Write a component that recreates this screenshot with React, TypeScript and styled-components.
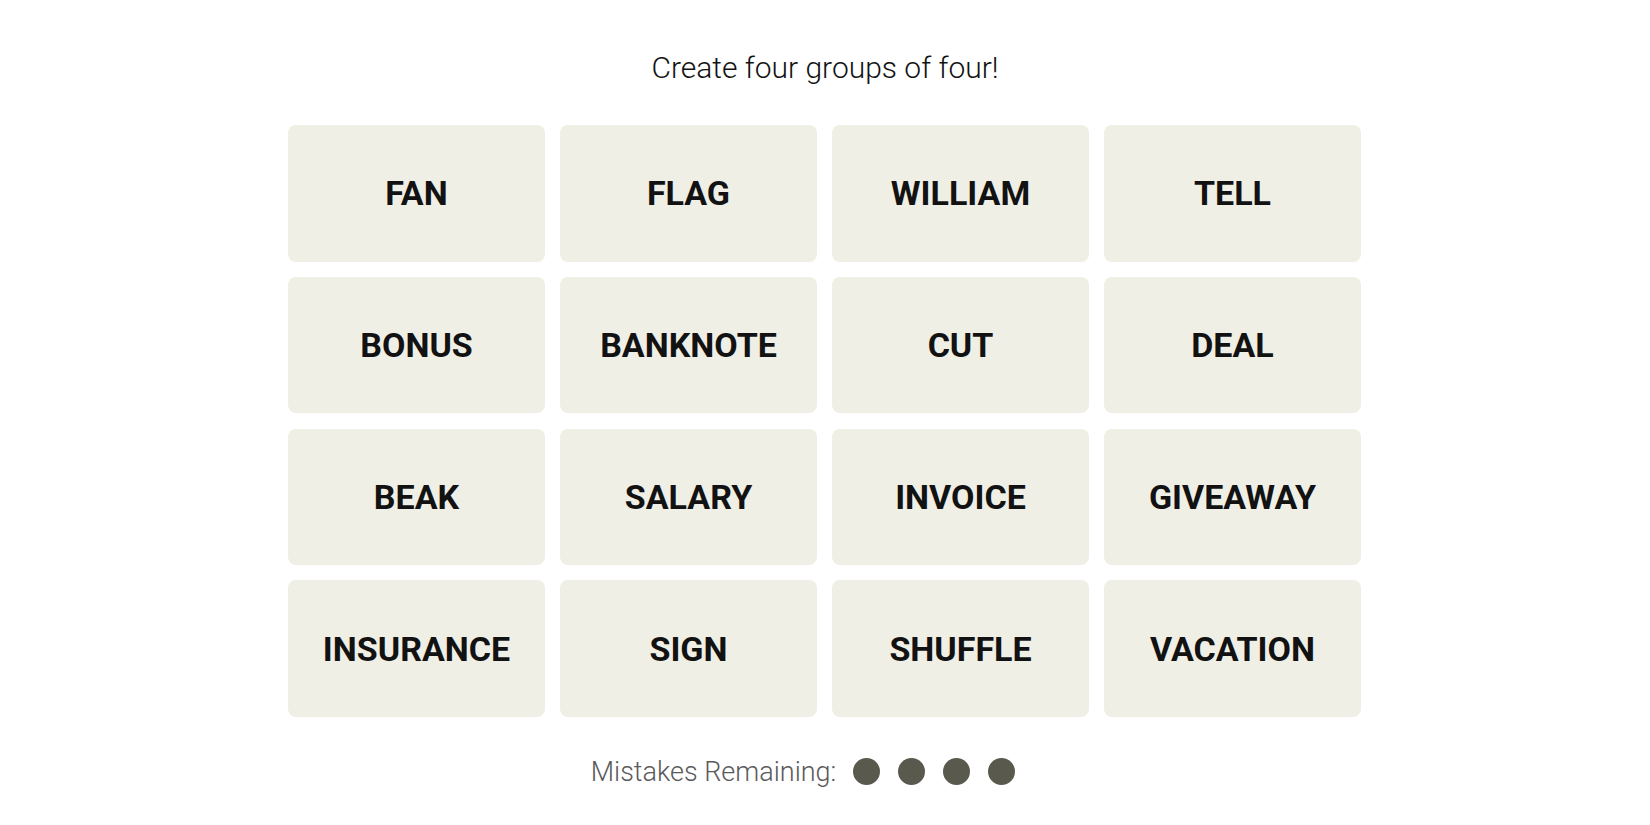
import React from "react";
import styled, { createGlobalStyle } from "styled-components";

const Global = createGlobalStyle`
  html, body { margin: 0; padding: 0; background: #ffffff; }
  body { font-family: Roboto, "Liberation Sans", sans-serif; }
`;

const Page = styled.main`
  display: flex;
  flex-direction: column;
  align-items: center;
  padding-top: 47px;
`;

const Title = styled.h1`
  margin: 0;
  font-family: Roboto, "Liberation Sans", sans-serif;
  font-weight: 300;
  font-size: 30px;
  line-height: 42px;
  color: #121212;
`;

const Board = styled.div`
  margin-top: 36px;
  margin-right: 1px;
  display: grid;
  grid-template-columns: repeat(4, 257px);
  grid-auto-rows: 136.5px;
  column-gap: 15px;
  row-gap: 15.3px;
`;

const Tile = styled.button`
  border: none;
  border-radius: 8px;
  background: #efefe6;
  color: #121212;
  font-family: Roboto, "Liberation Sans", sans-serif;
  font-weight: 700;
  font-size: 34px;
  text-transform: uppercase;
  display: flex;
  align-items: center;
  justify-content: center;
  padding: 0;
  cursor: pointer;
`;

const Mistakes = styled.div`
  margin-top: 39px;
  display: flex;
  align-items: center;
  gap: 17px;
`;

const MistakesLabel = styled.span`
  font-family: Roboto, "Liberation Sans", sans-serif;
  font-weight: 300;
  font-size: 27px;
  color: #5a5a5a;
`;

const Dots = styled.div`
  display: flex;
  gap: 18px;
  padding-right: 44px;
`;

const Dot = styled.span`
  width: 27px;
  height: 27px;
  border-radius: 50%;
  background: #5a594e;
`;

const words = [
  "FAN", "FLAG", "WILLIAM", "TELL",
  "BONUS", "BANKNOTE", "CUT", "DEAL",
  "BEAK", "SALARY", "INVOICE", "GIVEAWAY",
  "INSURANCE", "SIGN", "SHUFFLE", "VACATION",
];

export default function App() {
  return (
    <>
      <Global />
      <Page>
        <Title>Create four groups of four!</Title>
        <Board>
          {words.map((w) => (
            <Tile key={w}>{w}</Tile>
          ))}
        </Board>
        <Mistakes>
          <MistakesLabel>Mistakes Remaining:</MistakesLabel>
          <Dots>
            {[0, 1, 2, 3].map((i) => (
              <Dot key={i} />
            ))}
          </Dots>
        </Mistakes>
      </Page>
    </>
  );
}
